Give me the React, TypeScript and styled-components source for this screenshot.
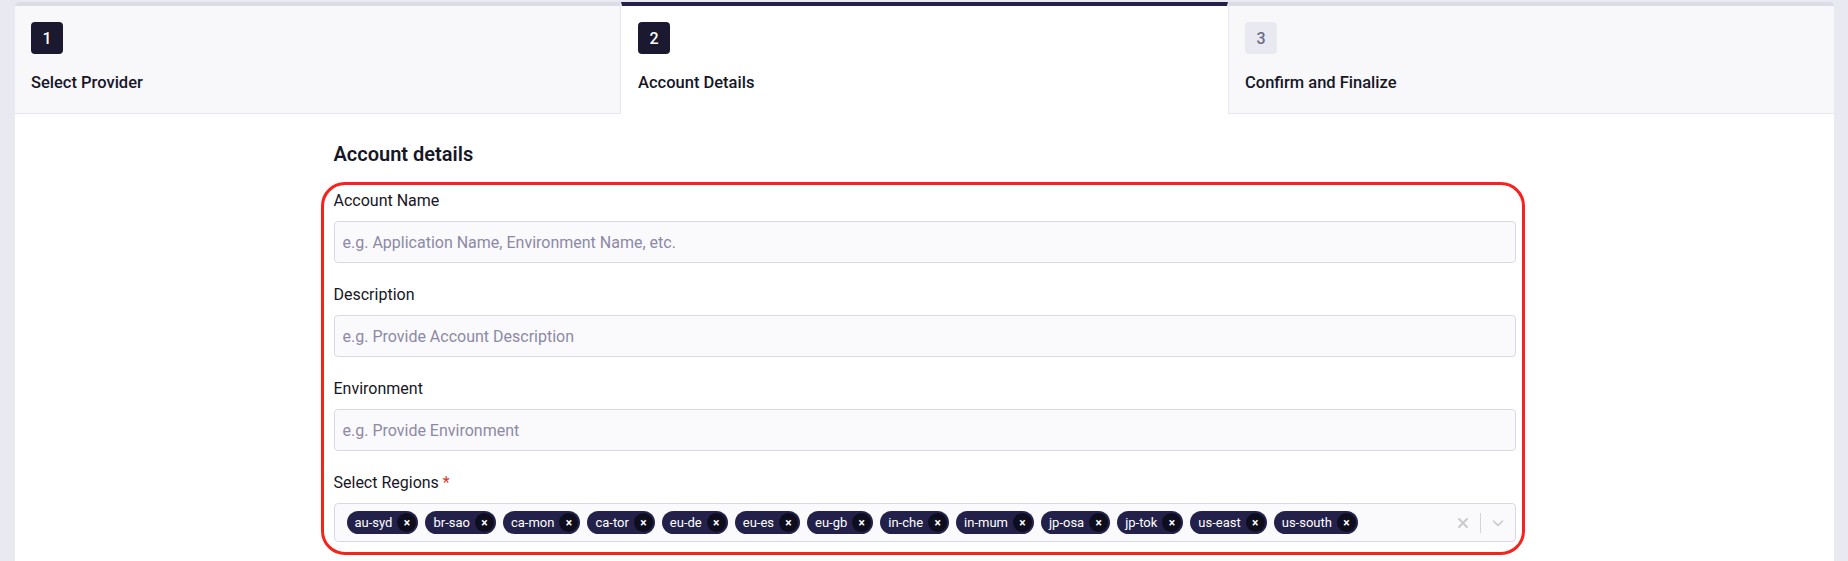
import * as React from "react";
import styled, { createGlobalStyle } from "styled-components";

const GlobalStyle = createGlobalStyle`
  html, body {
    margin: 0;
    padding: 0;
    background: #e9e9f1;
    font-family: Roboto, "Noto Sans", "Liberation Sans", sans-serif;
    color: #161627;
  }
`;

const steps = [
  { id: 1, name: "Select Provider" },
  { id: 2, name: "Account Details" },
  { id: 3, name: "Confirm and Finalize" },
];

const regions = [
  "au-syd",
  "br-sao",
  "ca-mon",
  "ca-tor",
  "eu-de",
  "eu-es",
  "eu-gb",
  "in-che",
  "in-mum",
  "jp-osa",
  "jp-tok",
  "us-east",
  "us-south",
];

export default function App() {
  const current = 2;

  return (
    <>
      <GlobalStyle />
      <Page>
        <Tabs>
          {steps.map(step => {
            const state = step.id === current ? "active" : step.id < current ? "done" : "todo";
            return (
              <Tab key={step.id} $state={state}>
                <StepNumber $state={state}>{step.id}</StepNumber>
                <StepName>{step.name}</StepName>
              </Tab>
            );
          })}
        </Tabs>

        <Body>
          <Column>
            <Heading>Account details</Heading>
            <FormBox>
              <Field>
                <Label>Account Name</Label>
                <Input placeholder="e.g. Application Name, Environment Name, etc." />
              </Field>
              <Field>
                <Label>Description</Label>
                <Input placeholder="e.g. Provide Account Description" />
              </Field>
              <Field>
                <Label>Environment</Label>
                <Input placeholder="e.g. Provide Environment" />
              </Field>
              <Field>
                <Label>
                  Select Regions <Required>*</Required>
                </Label>
                <Select>
                  <TagList>
                    {regions.map(r => (
                      <Tag key={r}>
                        {r}
                        <TagClose>×</TagClose>
                      </Tag>
                    ))}
                  </TagList>
                  <Indicators>
                    <svg width="14" height="14" viewBox="0 0 14 14" fill="none">
                      <path d="M3 3L11 11M11 3L3 11" stroke="#c9c9ce" strokeWidth="2" strokeLinecap="round" />
                    </svg>
                    <Divider />
                    <svg width="14" height="14" viewBox="0 0 14 14" fill="none">
                      <path d="M2.5 5L7 9.5L11.5 5" stroke="#c9c9ce" strokeWidth="1.6" strokeLinecap="round" strokeLinejoin="round" />
                    </svg>
                  </Indicators>
                </Select>
              </Field>
            </FormBox>
          </Column>
        </Body>
      </Page>
    </>
  );
}

type StepState = "active" | "done" | "todo";

const Page = styled.div`
  margin: 2px 14px 0 15px;
  height: 559px;
  background: #ffffff;
  border-radius: 4px 4px 0 0;
`;

const Tabs = styled.div`
  display: flex;
`;

const Tab = styled.div<{ $state: StepState }>`
  flex: 1;
  height: 112px;
  box-sizing: border-box;
  padding: 16px 16px 0;
  display: flex;
  flex-direction: column;
  gap: 18px;
  background: ${p => (p.$state === "active" ? "#ffffff" : "#f8f8fb")};
  border-top: 4px solid ${p => (p.$state === "active" ? "#23214a" : "#dcdce7")};
  border-bottom: 1px solid ${p => (p.$state === "active" ? "transparent" : "#e6e6ef")};
  border-left: 1px solid ${p => (p.$state === "active" ? "transparent" : "#e6e6ef")};
  border-right: 1px solid ${p => (p.$state === "active" ? "transparent" : "#e6e6ef")};

  &:first-child {
    border-top-left-radius: 4px;
    border-left: none;
  }
  &:last-child {
    border-top-right-radius: 4px;
    border-right: none;
  }
`;

const StepNumber = styled.div<{ $state: StepState }>`
  width: 32px;
  height: 32px;
  border-radius: 4px;
  display: flex;
  align-items: center;
  justify-content: center;
  font-size: 16px;
  font-weight: 500;
  background: ${p => (p.$state === "todo" ? "#e9e9f2" : "#1a1930")};
  color: ${p => (p.$state === "todo" ? "#6d6b85" : "#ffffff")};
`;

const StepName = styled.div`
  font-size: 16.5px;
  font-weight: 500;
  line-height: 22px;
  color: #161627;
`;

const Body = styled.div`
  padding-top: 28px;
`;

const Column = styled.div`
  width: 1204px;
  margin: 0 auto;
  transform: translateX(-2px);
`;

const Heading = styled.h2`
  margin: 0 0 16px 13px;
  font-size: 20px;
  line-height: 24px;
  font-weight: 600;
  color: #161627;
`;

const FormBox = styled.div`
  border: 3px solid #f5231c;
  border-radius: 24px;
  padding: 6px 6px 10px 10px;
  display: flex;
  flex-direction: column;
  gap: 22px;
`;

const Field = styled.div`
  display: flex;
  flex-direction: column;
  gap: 10px;
`;

const Label = styled.label`
  font-size: 16px;
  line-height: 20px;
  color: #161627;
`;

const Required = styled.span`
  color: #e0332c;
`;

const Input = styled.input`
  box-sizing: border-box;
  height: 42px;
  width: 100%;
  padding: 0 8px;
  border: 1px solid #d9d8e5;
  border-radius: 4px;
  background: #fafafd;
  font-family: inherit;
  font-size: 16px;
  color: #161627;
  outline: none;

  &::placeholder {
    color: #8c89a6;
  }
`;

const Select = styled.div`
  box-sizing: border-box;
  height: 39px;
  display: flex;
  align-items: center;
  padding: 0 10px 0 12px;
  border: 1px solid #d9d8e5;
  border-radius: 4px;
  background: #fafafd;
`;

const TagList = styled.div`
  flex: 1;
  display: flex;
  gap: 7px;
  align-items: center;
`;

const Tag = styled.span`
  height: 23px;
  display: inline-flex;
  align-items: center;
  gap: 5px;
  padding: 0 2px 0 8px;
  border-radius: 12px;
  background: #23214a;
  color: #ffffff;
  font-size: 13px;
`;

const TagClose = styled.span`
  width: 19px;
  height: 19px;
  border-radius: 50%;
  background: #0e0d1e;
  display: flex;
  align-items: center;
  justify-content: center;
  font-size: 12px;
  line-height: 1;
  font-weight: 700;
`;

const Indicators = styled.div`
  display: flex;
  align-items: center;
  gap: 10px;
`;

const Divider = styled.span`
  width: 1px;
  height: 20px;
  background: #d3d3d8;
`;
